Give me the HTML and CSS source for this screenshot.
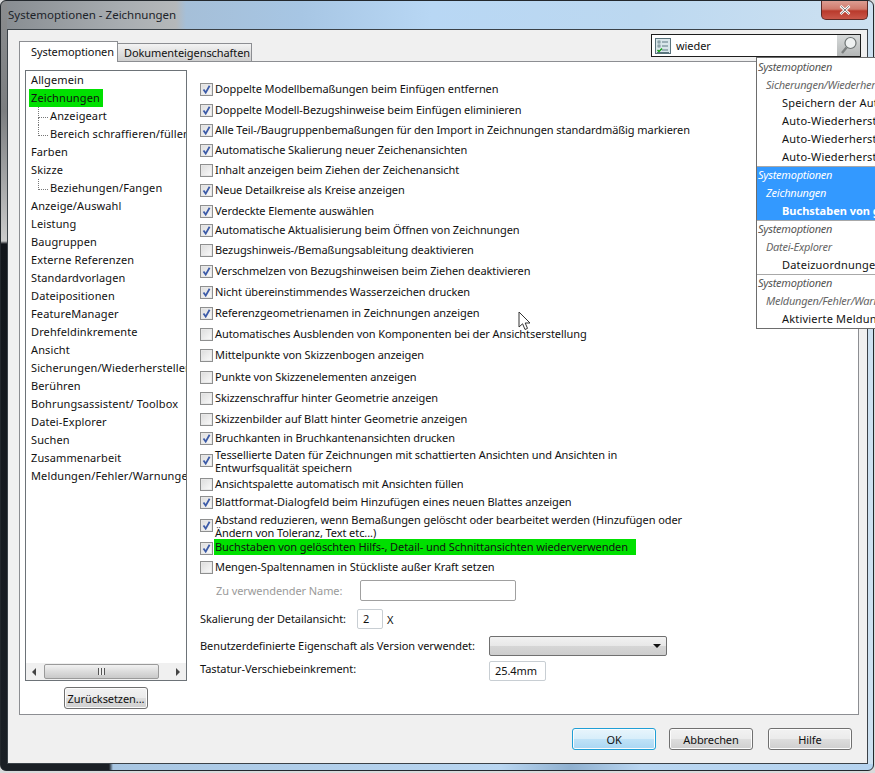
FILE: index.html
```html
<!DOCTYPE html>
<html lang="de">
<head>
<meta charset="utf-8">
<title>Systemoptionen - Zeichnungen</title>
<link rel="stylesheet" href="styles.css">
</head>
<body>
<div class="window">
  <div class="titlebar">
    <span class="title">Systemoptionen - Zeichnungen</span>
    <button class="close" aria-label="Schließen"><svg width="12" height="10" viewBox="0 0 12 10"><path d="M1.5 1 L10.5 9 M10.5 1 L1.5 9" stroke="#fff" stroke-width="2.6"/><path d="M2 1.2 L10 8.8 M10 1.2 L2 8.8" stroke="#5a5a5a" stroke-width=".8"/></svg></button>
  </div>
  <div class="dialog">
    <div class="topbar">
      <div class="tabs">
        <div class="tab active">Systemoptionen</div>
        <div class="tab">Dokumenteigenschaften</div>
      </div>
      <div class="search">
        <svg class="search-icon" width="16" height="16" viewBox="0 0 16 16"><rect x=".5" y=".5" width="15" height="15" fill="#d9e6ea" stroke="#59737c"/><path d="M2 14.5h12" stroke="#59737c"/><rect x="3" y="3" width="2" height="2" fill="none" stroke="#56717a" stroke-width=".7"/><rect x="3" y="7" width="2" height="2" fill="none" stroke="#56717a" stroke-width=".7"/><path d="M7 4h6M7 8h6M7 12h6" stroke="#5f7a84"/><path d="M2.5 12l1.5 1.5 3-3" stroke="#12a012" stroke-width="1.4" fill="none"/></svg>
        <span class="search-text">wieder</span>
        <span class="search-btn"><svg width="20" height="21" viewBox="0 0 20 21"><circle cx="11.5" cy="8" r="5.5" fill="#eef1f1" stroke="#6e7474" stroke-width="1.2"/><path d="M7.5 12.5 L3 18" stroke="#7b7f7f" stroke-width="2.4"/></svg></span>
      </div>
    </div>
    <div class="panel">
      <div class="side">
        <div class="tree">
          <div class="tree-list">
            <div class="node">Allgemein</div>
            <div class="node"><span class="mark">Zeichnungen</span></div>
            <div class="node child first-child">Anzeigeart</div>
            <div class="node child">Bereich schraffieren/füllen</div>
            <div class="node">Farben</div>
            <div class="node">Skizze</div>
            <div class="node child">Beziehungen/Fangen</div>
            <div class="node">Anzeige/Auswahl</div>
            <div class="node">Leistung</div>
            <div class="node">Baugruppen</div>
            <div class="node">Externe Referenzen</div>
            <div class="node">Standardvorlagen</div>
            <div class="node">Dateipositionen</div>
            <div class="node">FeatureManager</div>
            <div class="node">Drehfeldinkremente</div>
            <div class="node">Ansicht</div>
            <div class="node">Sicherungen/Wiederherstellen</div>
            <div class="node">Berühren</div>
            <div class="node">Bohrungsassistent/ Toolbox</div>
            <div class="node">Datei-Explorer</div>
            <div class="node">Suchen</div>
            <div class="node">Zusammenarbeit</div>
            <div class="node">Meldungen/Fehler/Warnungen</div>
          </div>
          <div class="hscroll">
            <span class="arrow arrow-l"></span>
            <span class="thumb"><span class="grip"></span></span>
            <span class="arrow arrow-r"></span>
          </div>
        </div>
        <button class="btn reset">Zurücksetzen...</button>
      </div>
      <div class="options">
        <label class="opt h21"><span class="cb on"></span><span>Doppelte Modellbemaßungen beim Einfügen entfernen</span></label>
        <label class="opt h20"><span class="cb on"></span><span>Doppelte Modell-Bezugshinweise beim Einfügen eliminieren</span></label>
        <label class="opt h20"><span class="cb on"></span><span>Alle Teil-/Baugruppenbemaßungen für den Import in Zeichnungen standardmäßig markieren</span></label>
        <label class="opt h20"><span class="cb on"></span><span>Automatische Skalierung neuer Zeichenansichten</span></label>
        <label class="opt h20"><span class="cb"></span><span>Inhalt anzeigen beim Ziehen der Zeichenansicht</span></label>
        <label class="opt h21"><span class="cb on"></span><span>Neue Detailkreise als Kreise anzeigen</span></label>
        <label class="opt h19"><span class="cb on"></span><span>Verdeckte Elemente auswählen</span></label>
        <label class="opt h20"><span class="cb on"></span><span>Automatische Aktualisierung beim Öffnen von Zeichnungen</span></label>
        <label class="opt h21"><span class="cb"></span><span>Bezugshinweis-/Bemaßungsableitung deaktivieren</span></label>
        <label class="opt h21"><span class="cb on"></span><span>Verschmelzen von Bezugshinweisen beim Ziehen deaktivieren</span></label>
        <label class="opt h21"><span class="cb on"></span><span>Nicht übereinstimmendes Wasserzeichen drucken</span></label>
        <label class="opt h21"><span class="cb on"></span><span>Referenzgeometrienamen in Zeichnungen anzeigen</span></label>
        <label class="opt h21"><span class="cb"></span><span>Automatisches Ausblenden von Komponenten bei der Ansichtserstellung</span></label>
        <label class="opt h22"><span class="cb"></span><span>Mittelpunkte von Skizzenbogen anzeigen</span></label>
        <label class="opt h21"><span class="cb"></span><span>Punkte von Skizzenelementen anzeigen</span></label>
        <label class="opt h21"><span class="cb"></span><span>Skizzenschraffur hinter Geometrie anzeigen</span></label>
        <label class="opt h19"><span class="cb"></span><span>Skizzenbilder auf Blatt hinter Geometrie anzeigen</span></label>
        <label class="opt h19"><span class="cb on"></span><span>Bruchkanten in Bruchkantenansichten drucken</span></label>
        <label class="opt two h27"><span class="cb on"></span><span>Tessellierte Daten für Zeichnungen mit schattierten Ansichten und Ansichten in<br>Entwurfsqualität speichern</span></label>
        <label class="opt h18"><span class="cb"></span><span>Ansichtspalette automatisch mit Ansichten füllen</span></label>
        <label class="opt h20"><span class="cb on"></span><span>Blattformat-Dialogfeld beim Hinzufügen eines neuen Blattes anzeigen</span></label>
        <label class="opt two h26"><span class="cb on"></span><span>Abstand reduzieren, wenn Bemaßungen gelöscht oder bearbeitet werden (Hinzufügen oder<br>Ändern von Toleranz, Text etc...)</span></label>
        <label class="opt h19"><span class="cb on"></span><span class="mark-row">Buchstaben von gelöschten Hilfs-, Detail- und Schnittansichten wiederverwenden</span></label>
        <label class="opt h20"><span class="cb"></span><span>Mengen-Spaltennamen in Stückliste außer Kraft setzen</span></label>
        <div class="field-row name-row"><span class="dim name-label">Zu verwendender Name:</span><span class="input name-input"></span></div>
        <div class="field-row scale-row"><span class="scale-label">Skalierung der Detailansicht:</span><span class="input scale-input">2</span><span>X</span></div>
        <div class="field-row version-row"><span class="long-label lifted">Benutzerdefinierte Eigenschaft als Version verwendet:</span><span class="combo"><span class="combo-arrow"></span></span></div>
        <div class="field-row key-row"><span class="long-label raised">Tastatur-Verschiebeinkrement:</span><span class="input key-input">25.4mm</span></div>
      </div>
    </div>
    <div class="footer">
      <button class="btn foot default">OK</button>
      <button class="btn foot">Abbrechen</button>
      <button class="btn foot">Hilfe</button>
    </div>
  </div>
</div>

<div class="results">
  <div class="group">
    <div class="l1">Systemoptionen</div>
    <div class="l2">Sicherungen/Wiederherstellen</div>
    <div class="l3">Speichern der Auto-Wiederherstellung</div>
    <div class="l3">Auto-Wiederherstellung</div>
    <div class="l3">Auto-Wiederherstellung</div>
    <div class="l3">Auto-Wiederherstellung</div>
  </div>
  <div class="group selected">
    <div class="l1">Systemoptionen</div>
    <div class="l2">Zeichnungen</div>
    <div class="l3">Buchstaben von gelöschten</div>
  </div>
  <div class="group">
    <div class="l1">Systemoptionen</div>
    <div class="l2">Datei-Explorer</div>
    <div class="l3">Dateizuordnungen</div>
  </div>
  <div class="group">
    <div class="l1">Systemoptionen</div>
    <div class="l2">Meldungen/Fehler/Warnungen</div>
    <div class="l3">Aktivierte Meldungen</div>
  </div>
</div>

<svg class="cursor" width="14" height="20" viewBox="0 0 14 20"><path d="M1 1 V16 L4.6 12.8 L7 18.5 L9.5 17.4 L7.2 12 L12 12 Z" fill="#fff" stroke="#333" stroke-width="1"/></svg>
</body>
</html>
```
FILE: styles.css
```css
* { box-sizing: border-box; }
html, body { margin: 0; padding: 0; }
body {
  width: 875px;
  height: 773px;
  overflow: hidden;
  position: relative;
  font-family: "Noto Sans", "Open Sans", sans-serif;
  font-size: 11px;
  letter-spacing: -.08px;
  color: #111;
  background: #d9dadb;
}
.window {
  width: 874px;
  height: 771px;
  padding: 0 5px 6px 6px;
  display: flex;
  flex-direction: column;
  border: 1px solid #23282d;
  border-radius: 6px;
  background:
    linear-gradient(180deg, #8b8d8f 0, #7c7e80 110px, #a5a6a7 180px, #cbcbcb 240px, #12161b 243px, #1a1f25 100%) left top / 6px 100% no-repeat,
    linear-gradient(90deg, #1a1f25 0, #1a1f25 108px, #a8c6e2 112px, #b9d6f1 500px, #8fb0cf 570px, #b9d6f1 640px, #b5d3ef 100%) left bottom / 100% 6px no-repeat,
    linear-gradient(90deg, #878c91 0, #a8adb1 120px, #b5b8ba 175px, #a5bfd8 185px, #a7c6e4 300px, #b8d7f4 430px, #bcd8f0 640px, #cde1f1 100%);
}
.titlebar {
  height: 28px;
  flex: none;
  display: flex;
  align-items: flex-start;
  justify-content: space-between;
}
.title { font-size: 11.5px; letter-spacing: 0; margin: 5px 0 0 1px; color: #1c2329; line-height: 18px; }
.close {
  width: 47px;
  height: 19px;
  margin: 0;
  padding: 0;
  display: flex;
  align-items: center;
  justify-content: center;
  border: 1px solid #5b2a26;
  border-top: 0;
  border-radius: 0 0 5px 5px;
  background: linear-gradient(180deg, #dc9d92 0, #cf7a6c 45%, #b93a2c 55%, #c9574a 100%);
}
.dialog {
  flex: 1;
  background: #f0f0f0;
  border: 1px solid #3b4248;
  padding: 4px 8px 0 11px;
  display: flex;
  flex-direction: column;
  min-height: 0;
}
.topbar {
  height: 27px;
  flex: none;
  display: flex;
  justify-content: space-between;
  align-items: flex-start;
}
.tabs { display: flex; align-items: flex-end; height: 27px; }
.tab {
  width: 135px;
  height: 18px;
  padding: 0 0 0 6px;
  line-height: 17px;
  white-space: nowrap;
  border: 1px solid #8c8e92;
  border-bottom: 0;
  background: linear-gradient(180deg, #f3f3f3, #cfcfcf);
}
.tab.active {
  width: 99px;
  height: 21px;
  margin: 0 -1px -1px 0;
  padding: 0 0 0 11px;
  line-height: 20px;
  background: #fff;
  position: relative;
  z-index: 1;
}
.search {
  width: 210px;
  height: 23px;
  margin-right: -2px;
  padding: 0 0 0 3px;
  border: 1px solid #1d1d1d;
  background: #fff;
  display: flex;
  align-items: center;
  gap: 5px;
}
.search-text { flex: 1; }
.search-btn { width: 23px; height: 21px; display: flex; align-items: center; justify-content: center; background: linear-gradient(180deg, #d7dada, #b4b7b7); }
.panel {
  flex: none;
  height: 654px;
  background: #fff;
  border: 1px solid #8c8e92;
  display: flex;
  padding: 8px 0 0 5px;
}
.side { width: 162px; flex: none; display: flex; flex-direction: column; align-items: center; }
.tree {
  width: 162px;
  height: 611px;
  border: 1px solid #6d7378;
  display: flex;
  flex-direction: column;
  overflow: hidden;
  letter-spacing: .12px;
}
.tree-list { flex: 1; padding: 0 0 0 3px; overflow: hidden; }
.node { height: 18px; line-height: 18px; white-space: nowrap; padding-left: 2px; }
.mark { display: inline-block; background: #00e000; margin-left: -2px; padding-left: 2px; width: 74px; height: 18px; }
.node.child { padding-left: 21px; position: relative; }
.node.child::before {
  content: "";
  position: absolute;
  left: 9px;
  top: 0;
  width: 9px;
  height: 10px;
  border-left: 1px dotted #777;
  border-bottom: 1px dotted #777;
}
.node.first-child::after {
  content: "";
  position: absolute;
  left: 9px;
  top: 10px;
  height: 8px;
  border-left: 1px dotted #777;
}
.hscroll {
  height: 17px;
  flex: none;
  display: flex;
  align-items: center;
  background: #f0f0f0;
  padding-left: 6px;
}
.arrow { width: 0; height: 0; border-top: 4px solid transparent; border-bottom: 4px solid transparent; }
.arrow-l { border-right: 4px solid #444; }
.arrow-r { border-left: 4px solid #444; }
.thumb {
  width: 115px;
  height: 15px;
  margin: 0 17px 0 8px;
  border: 1px solid #9a9a9a;
  border-radius: 2px;
  background: linear-gradient(180deg, #f2f2f2, #dcdcdc 50%, #c9c9c9);
  display: flex;
  align-items: center;
  justify-content: center;
}
.grip { width: 7px; height: 7px; background: repeating-linear-gradient(90deg, #555 0 1px, #eee 1px 3px); }
.btn {
  font-family: inherit;
  font-size: 11px;
  letter-spacing: inherit;
  color: #111;
  padding: 0;
  border: 1px solid #707070;
  border-radius: 3px;
  background: linear-gradient(180deg, #f2f2f2 0, #ebebeb 48%, #dddddd 52%, #cfcfcf 100%);
  box-shadow: inset 0 0 0 1px #fcfcfc;
}
.reset { width: 84px; height: 22px; margin-top: 6px; }
.options { flex: 1; padding: 9px 0 0 13px; display: flex; flex-direction: column; }
.opt { display: flex; align-items: flex-start; gap: 2px; white-space: nowrap; line-height: 20px; flex: none; }
.opt .cb { margin-top: 4px; }
.opt.two { line-height: 12.5px; padding-top: 2px; }
.opt.two .cb { margin-top: 5px; }
.h18 { height: 18px; }
.h19 { height: 19px; }
.h20 { height: 20px; }
.h21 { height: 21px; }
.h22 { height: 22px; }
.h26 { height: 26px; }
.h27 { height: 27px; }
.cb {
  width: 13px;
  height: 13px;
  flex: none;
  border: 1px solid #8e8f8f;
  background: linear-gradient(135deg, #dcdcdc, #fbfbfb);
  box-shadow: inset 0 0 0 1px #e8e8e8;
  display: block;
}
.cb.on {
  background-image: url("data:image/svg+xml,%3Csvg xmlns='http://www.w3.org/2000/svg' width='11' height='11'%3E%3Cpath d='M2.5 5.5 L4.7 8.6 L8.6 1.8' fill='none' stroke='%233c5ba8' stroke-width='1.8'/%3E%3C/svg%3E"), linear-gradient(135deg, #dcdcdc, #fbfbfb);
  background-repeat: no-repeat;
  background-position: center;
}
.mark-row { background: #00e000; line-height: 16px; height: 16px; margin-top: 1px; margin-left: -1px; padding: 0 1px; width: 422px; }
.field-row { display: flex; align-items: center; white-space: nowrap; flex: none; }
.dim { color: #9a9a9a; }
.input { display: block; flex: none; background: #fff; border: 1px solid #c8ced3; border-radius: 2px; }
.name-row { height: 21px; margin-top: 3px; padding-left: 16px; }
.name-label { width: 144px; }
.name-input { width: 156px; height: 21px; border-color: #a0a0a0; }
.scale-row { height: 20px; margin-top: 8px; }
.scale-label { width: 157px; padding-bottom: 2px; }
.scale-input { width: 26px; height: 20px; margin-right: 4px; padding: 0 5px; line-height: 18px; }
.version-row { height: 20px; margin-top: 7px; }
.long-label { width: 289px; }
.lifted { padding-bottom: 2px; }
.raised { padding-bottom: 5px; }
.combo {
  width: 178px;
  height: 20px;
  border: 1px solid #707070;
  border-radius: 2px;
  background: linear-gradient(180deg, #f2f2f2, #e8e8e8 48%, #d6d6d6 52%, #cdcdcd);
  display: flex;
  align-items: center;
  justify-content: flex-end;
  padding-right: 5px;
}
.combo-arrow { width: 0; height: 0; border-left: 4px solid transparent; border-right: 4px solid transparent; border-top: 4px solid #111; }
.key-row { height: 20px; margin-top: 5px; }
.key-input { width: 57px; height: 20px; padding: 0 5px; line-height: 18px; }
.footer { flex: 1; display: flex; justify-content: flex-end; gap: 15px; padding: 13px 7px 0 0; }
.foot { width: 84px; height: 22px; }
.foot.default {
  margin-right: -2px;
  border-color: #1f9fd6;
  background: linear-gradient(180deg, #e8f5fc 0, #d8eefa 48%, #bfe2f7 52%, #a9d6f3 100%);
}
.results {
  position: absolute;
  left: 756px;
  top: 57px;
  width: 119px;
  height: 272px;
  overflow: hidden;
  background: #fff;
  border: 1px solid #6d6d6d;
  border-right: 0;
}
.group { white-space: nowrap; }
.group + .group { border-top: 1px solid #a8a8a8; }
.group > div { height: 18px; line-height: 18px; }
.group + .group > .l1 { height: 17px; line-height: 15px; }
.l1 { font-style: italic; color: #555; padding-left: 1px; letter-spacing: -.25px; }
.l2 { font-style: italic; color: #666; padding-left: 9px; letter-spacing: -.25px; }
.l3 { padding-left: 25px; color: #111; letter-spacing: .2px; }
.selected { background: #3399ff; }
.selected .l1, .selected .l2 { color: #fff; }
.selected .l3 { color: #fff; font-weight: 700; letter-spacing: 0; }
.cursor { position: absolute; left: 518px; top: 311px; }
```
